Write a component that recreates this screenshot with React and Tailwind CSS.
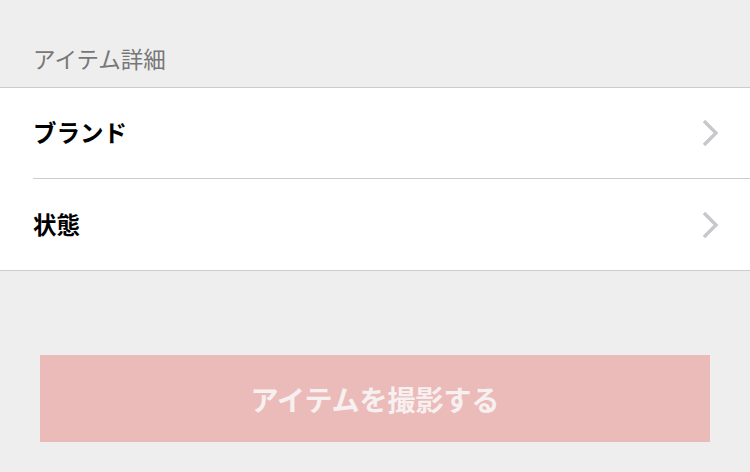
const font = { fontFamily: '"Noto Sans CJK JP", "Noto Sans", sans-serif' };

const Chevron = () => (
  <svg width="18" height="28" viewBox="0 0 18 28" fill="none">
    <path d="M3 2 L15 14 L3 26" stroke="#c7c7cc" strokeWidth="3.4" />
  </svg>
);

const Row = ({ label, last }) => (
  <div className="pl-[33px] bg-white">
    <div className={`h-[91px] flex items-center justify-between pr-[31px] ${last ? '' : 'border-b border-[#cccccc]'}`}>
      <p className="text-[23.5px] font-bold text-black leading-none">{label}</p>
      <Chevron />
    </div>
  </div>
);

export default function App() {
  return (
    <div className="w-[750px] h-[472px] bg-[#eeeeee] overflow-hidden" style={font}>
      <div className="h-[87px] flex items-end pb-[18px] pl-[33px]">
        <p className="text-[22.5px] text-[#777777] leading-none">アイテム詳細</p>
      </div>
      <div className="border-y border-[#cccccc]">
        <Row label="ブランド" />
        <Row label="状態" last />
      </div>
      <div className="px-[40px] pt-[84px]">
        <button className="w-full h-[87px] bg-[#ebbbba] flex items-center justify-center">
          <span className="text-[28px] font-bold text-[#f7f0f0] leading-none">アイテムを撮影する</span>
        </button>
      </div>
    </div>
  );
}
